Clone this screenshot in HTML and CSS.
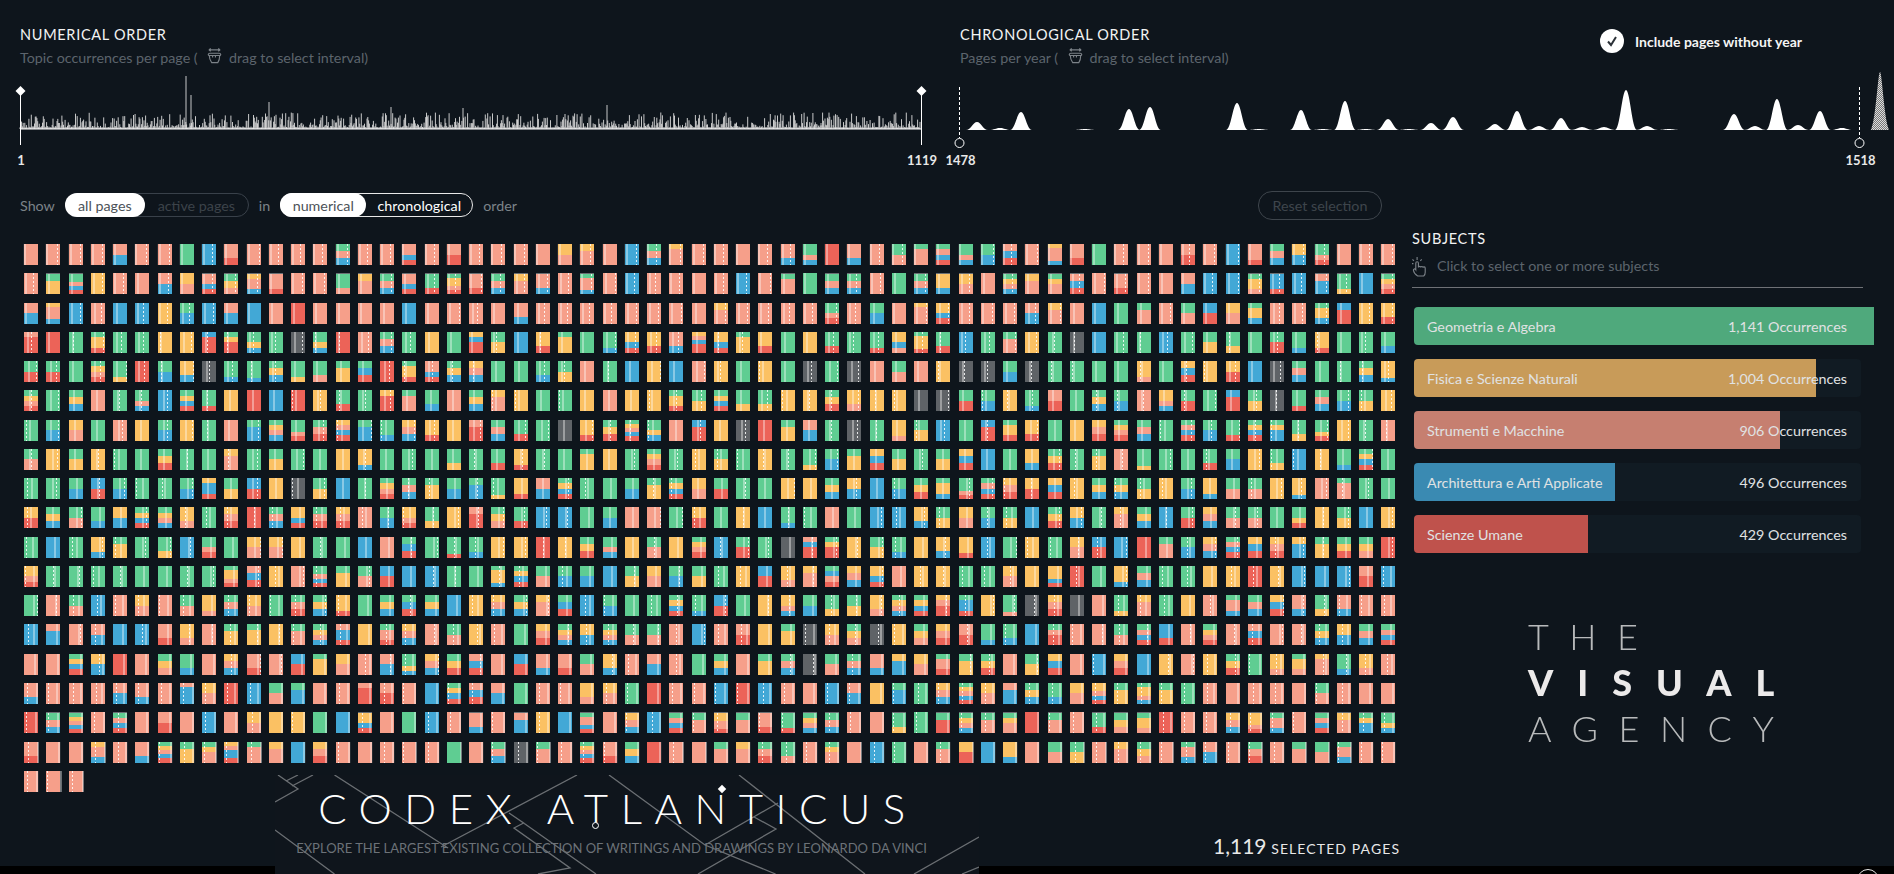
FILE: index.html
```html
<!DOCTYPE html>
<html>
    <head>
        <title>Codex Atlanticus</title>
        <link rel="stylesheet" href="styles.css">
    </head>
    <body>
        <header class="charts">
            <section class="chart-block chart-num">
                <div class="chart-head">
                    <div>
                        <h2 class="heading">NUMERICAL ORDER</h2>
                        <p class="hint">Topic occurrences per page (
                            <svg class="grab" viewBox="0 0 18 18"><use href="#grab-icon"/></svg>
                            drag to select interval)</p>
                    </div>
                </div>
                <svg id="numChart" class="chart" viewBox="0 70 940 100"></svg>
            </section>
            <section class="chart-block chart-year">
                <div class="chart-head">
                    <div class="head-text">
                        <h2 class="heading">CHRONOLOGICAL ORDER</h2>
                        <p class="hint">Pages per year (
                            <svg class="grab" viewBox="0 0 18 18"><use href="#grab-icon"/></svg>
                            drag to select interval)</p>
                    </div>
                    <div class="year-toggle">
                        <span class="check">
                            <svg viewBox="0 0 24 24"><path d="M8 12.500l3 3.500 5-8" /></svg>
                        </span>
                        Include pages without year
                    </div>
                </div>
                <svg id="yearChart" class="chart" viewBox="940 70 954 100"></svg>
            </section>
        </header>

        <div class="controls">
            <span>Show</span>
            <div class="switch switch-dim">
                <span class="opt opt-on opt-all">all pages</span>
                <span class="opt opt-active">active pages</span>
            </div>
            <span>in</span>
            <div class="switch switch-lit">
                <span class="opt opt-on opt-num">numerical</span>
                <span class="opt opt-chrono">chronological</span>
            </div>
            <span>order</span>
            <button class="reset">Reset selection</button>
        </div>

        <main class="content">
            <div id="pages" class="pages"></div>
            <aside class="subjects">
                <h2 class="heading">SUBJECTS</h2>
                <p class="hint subject-hint">
                    <svg class="tap" viewBox="0 0 18 22">
                        <path d="M6 21c-2-1-4-3-4.500-6-.2-1.500 1.500-2 2.500-.5V7.500c0-2 2.800-2 2.800 0V12c0-1.600 2.500-1.600 2.500 0 0-1.400 2.400-1.400 2.400 .2 .2-1.200 2.300-1 2.300 .6V17c0 1.700-.6 3-1.500 4z"/>
                        <path d="M5.400 4V1M2 5L.5 3.500M8.800 5l1.500-1.500M1.500 8H0"/>
                    </svg>
                    Click to select one or more subjects
                </p>
                <div id="bars" class="bars"></div>
                <div class="logo">
                    <div class="logo-line">THE</div>
                    <div class="logo-line logo-bold">VISUAL</div>
                    <div class="logo-line">AGENCY</div>
                </div>
            </aside>
        </main>

        <footer class="footer">
            <div class="banner">
                <svg class="banner-lines" viewBox="275 775 704 99">
                    <path d="M275 802L298 789 278 775M313 775L292 786M298 775L286 781"/>
                    <path d="M334.500 775L448 848M577 775L441 847M275 830L334.500 874"/>
                    <path d="M509 813L523.600 823 514 828 570 868 538 874M523.600 823L596 874"/>
                    <path d="M609 775L705 845 775.600 874M778 803L705 845M754 817L776 829 698 874M739 775L865 874"/>
                    <path d="M979 837L914 874M979 867L962 874"/>
                </svg>
                <h1 class="title">CODEX A<span class="mark-ring">T</span>LA<span class="mark-tip">N</span>TICUS</h1>
                <p class="tagline">EXPLORE THE LARGEST EXISTING COLLECTION OF WRITINGS AND DRAWINGS BY LEONARDO DA VINCI</p>
            </div>
            <div class="count"><b>1,119</b> SELECTED PAGES</div>
            <span class="help"></span>
        </footer>

        <svg class="defs" width="0" height="0">
            <symbol id="grab-icon" viewBox="0 0 18 18">
                <path d="M3 2h12M3 2l2-1.500M3 2l2 1.500M15 2l-2-1.500M15 2l-2 1.500"/>
                <path d="M3.500 8c-1.500 0-1.500-2.500 .5-2.500h10c2 0 2 2.500 .5 2.500M3.500 8c0 4 1 5.500 2.500 7.500h6.500c1.500-2 2-3.500 2-7.500M3.500 8h11M7 8v2M10 8v2"/>
            </symbol>
        </svg>
        <script src="app.js"></script>
    </body>
</html>
```

FILE: styles.css
```css
html, body{
    margin:0;
    padding:0;
    height:874px;
    overflow:hidden;
}
body{
    font-family: 'Lato', sans-serif;
    font-size:14.300px;
    color:#687078;
    background-color:#0e151c;
}
.charts{
    display:flex;
    padding-top:25px;
}
.chart-block{
    padding-left:20px;
    box-sizing:border-box;
}
.chart-num{
    width:940px;
}
.chart-year{
    width:954px;
}
.chart-head{
    display:flex;
    height:45px;
}
.head-text{
    width:640px;
}
.chart{
    display:block;
    width:calc(100% + 20px);
    height:100px;
    margin-left:-20px;
    overflow:visible;
}
.chart-label{
    fill:#e8e8e8;
    font-size:13px;
    font-weight:700;
    text-anchor:middle;
}
.heading{
    margin:0;
    font-size:14.500px;
    font-weight:400;
    line-height:20px;
    letter-spacing:.7px;
    color:#f2f3f3;
}
.hint{
    margin:3px 0 0;
    line-height:20px;
    white-space:nowrap;
    color:#5c646c;
}
.grab{
    width:17px;
    height:17px;
    margin:0 2px 0 5px;
    vertical-align:-2px;
    fill:none;
    stroke:#7c8288;
    stroke-width:1.200;
}
.defs{
    position:absolute;
}
.year-toggle{
    display:flex;
    align-items:center;
    gap:11px;
    height:24px;
    margin-top:4px;
    font-size:14px;
    font-weight:700;
    color:#f4f4f4;
}
.check{
    width:24px;
    height:24px;
    border-radius:50%;
    background-color:#fff;
}
.check svg{
    display:block;
    fill:none;
    stroke:#2c3238;
    stroke-width:2;
}
.controls{
    display:flex;
    align-items:center;
    gap:10px;
    width:1382px;
    height:28px;
    margin-top:21px;
    padding-left:20px;
    box-sizing:border-box;
    color:#7c8389;
}
.switch{
    display:flex;
    height:24px;
    box-sizing:border-box;
    border-radius:12px;
    border:1px solid #39414a;
}
.switch-lit{
    border-color:#e8e8e8;
}
.opt{
    display:flex;
    align-items:center;
    justify-content:center;
    box-sizing:border-box;
    border-radius:12px;
}
.opt-on{
    margin:-1px 0 -1px -1px;
    color:#4c5258;
    background-color:#fff;
}
.opt-all{
    width:80px;
}
.opt-active{
    width:103px;
    color:#3c434a;
}
.opt-num{
    width:86px;
}
.opt-chrono{
    width:106px;
    color:#fff;
}
.reset{
    width:124px;
    height:29px;
    margin-left:auto;
    padding:0;
    font:inherit;
    color:#3e454c;
    background:none;
    border:1px solid #3e454c;
    border-radius:14px;
}
.content{
    display:flex;
    height:556px;
}
.pages{
    display:grid;
    grid-template-columns:repeat(62, 14px);
    grid-auto-rows:21px;
    justify-content:space-between;
    row-gap:8.280px;
    align-content:start;
    width:1372px;
    height:21px;
    margin:25px 0 0 24px;
}
.page{
    position:relative;
    display:flex;
    flex-direction:column;
}
.page-left{
    box-shadow:-1px 0 0 #262c32;
}
.page-right{
    box-shadow:1px 0 0 #262c32;
}
.page-capped{
    border-top:1px solid #6a6f73;
    box-sizing:border-box;
}
.seg{
    flex:1;
}
.seg-s{ background-color:#f69f8a; }
.seg-g{ background-color:#5fcd92; }
.seg-y{ background-color:#fbc163; }
.seg-b{ background-color:#42a8d6; }
.seg-r{ background-color:#ec6358; }
.seg-k{ background-color:#5f6367; }
.spine{
    position:absolute;
    top:0;
    bottom:0;
    width:2px;
    background-color:rgba(255,255,255,.38);
}
.stitch{
    position:absolute;
    top:0;
    bottom:0;
    width:1px;
    background:repeating-linear-gradient(rgba(255,255,255,.85) 0 2px, transparent 2px 4px);
}
.subjects{
    width:462px;
    margin-left:16px;
    padding-top:10px;
}
.subject-hint{
    display:flex;
    align-items:center;
    gap:8px;
    width:451px;
    height:22px;
    margin-top:6px;
    padding-bottom:10px;
    border-bottom:1px solid #6e7176;
}
.tap{
    width:17px;
    height:21px;
    fill:none;
    stroke:#7c8288;
    stroke-width:1.200;
}
.bars{
    display:flex;
    flex-direction:column;
    gap:14px;
    width:447px;
    margin:19px 0 0 2px;
}
.bar{
    position:relative;
    display:flex;
    justify-content:space-between;
    align-items:center;
    height:38px;
    padding:0 14px 0 13px;
    border-radius:4px;
    color:#e0e2e3;
    background-color:#111b23;
}
.bar-fill{
    position:absolute;
    top:0;
    bottom:0;
    left:0;
    border-radius:4px 0 0 4px;
}
.bar-text{
    position:relative;
}
.fill-g{ background-color:#4fa97c; }
.fill-y{ background-color:#c89b59; }
.fill-s{ background-color:#c67f70; }
.fill-b{ background-color:#3a8ab2; }
.fill-r{ background-color:#bf524c; }
.logo{
    margin:60px 0 0 116px;
    filter:blur(.4px);
}
.logo-line{
    height:46px;
    font-size:36px;
    font-weight:300;
    line-height:46px;
    letter-spacing:20.500px;
    color:#b8babb;
}
.logo-bold{
    font-weight:900;
    letter-spacing:24px;
    color:#eceaea;
}
.footer{
    position:relative;
    display:flex;
    height:99px;
    padding-left:275px;
    background:linear-gradient(transparent 91px, #000 91px);
}
.banner{
    position:relative;
    width:704px;
    overflow:hidden;
    text-align:center;
    background-color:#0f151c;
}
.banner-lines{
    position:absolute;
    top:0;
    left:0;
    width:704px;
    height:99px;
    fill:none;
    stroke:#6b6f73;
    stroke-width:1.300;
}
.title{
    position:relative;
    margin:12px 0 0;
    padding-right:18px;
    font-size:42px;
    font-weight:300;
    line-height:42px;
    letter-spacing:12.500px;
    color:#fff;
}
.mark-ring, .mark-tip{
    position:relative;
}
.mark-ring::after{
    content:"";
    position:absolute;
    left:calc((100% - 12.500px) / 2 - 4px);
    bottom:4px;
    width:5px;
    height:5px;
    border:1px solid #fff;
    border-radius:50%;
    background-color:#0f151c;
}
.mark-tip::after{
    content:"";
    position:absolute;
    right:14px;
    top:3px;
    width:6px;
    height:6px;
    transform:rotate(45deg);
    background-color:#fff;
}
.tagline{
    position:relative;
    margin:11px 0 0;
    padding-right:31px;
    font-size:13px;
    white-space:nowrap;
    color:#6c7278;
}
.count{
    margin:58px 0 0 234px;
    font-size:14px;
    letter-spacing:1.100px;
    color:#e8e8e8;
}
.count b{
    font-size:21px;
    font-weight:400;
    letter-spacing:0;
}
.help{
    position:absolute;
    top:94px;
    left:1857px;
    width:20px;
    height:20px;
    border:1px solid #e8e8e8;
    border-radius:50%;
}
```

FILE: app.js
```js
// colours per page, top to bottom; each letter is one topic share
var rows = [
    "s s s s sb s s g b ssr s s s s gsb s s ssbr s sr s s s s ys yss s b gsb ysss s s s s ssb ggsb r ssb s gs gsss gsbr ggsb gb sbr s ysssb ssr g s s s sr s b sssr gsb yb ggsr s s s",
    "s gyy ggsbr y s s sb ys ssbr gys yssb sssr s s ggs yss gsb ssbr ggr gyysr ssr gsb yss ssb s gsssb s b s s s s b s gsss g gsb gsb s g gsb yyb yyss s gysb yss gyss sbr s ssr s s sb b b gyys bbbr b sbb gggy b gysr",
    "sb ysssb b s b b y gb b sb b s r s s s s b s s s s ssb s s s s s s s s yss s s s s ggsr s gb s yssss yybr s s s sb yss s b g gss s gs br ys gyyb s s gyyb brr y yyr",
    "srrr r g gyyr g g y y brrr gyrr ggyb g k ggyb r s gsb g y g ybrr gy b yyr gyyy g gggb yybr yyr ssb ysbrr yybr gyyy yyr g y ggr g gggr yybs gyyyr ggr b g gss y g k b g g b g gy ggy g gr gggb yyyr g g ggb",
    "gr gr g gysr gggy r gb yyb k gggb ggggb gyb gggy ggs gyy gbr r gyyr ssbr gyb ysb g g ggb gy s g b y b s y g y g k g k s gs s y k k gb k g g g g yyys g ybr y yr b k gsb g g gyb yyyyb",
    "gysr g gyb s g ggsb b gybr gggr y r b r y ggr g yrrr gsss ggb s gyb yss y g g y s y y gyyr gy gybr ggy ggy y y gyr yys y y k k gr gb y gggb sr g gyb gb s yysb gr g brr gy k gggr gsb gb gy y",
    "g gb ys g s y gb y g s gbb gysb gggsr gsr ysbr gbb gggb ysb yyyr y srr gsb ggr g k yyyr gyr gysbr ggyb s brr y k r gyy sb g k g yyyys gy b g brr gyyr yyr g y ysr gysr gsb g gsbr gb gggr gybr gybb ggy gggyr y g",
    "gs y gy y g g gyr g g yss g gy g g y yyyb g g g ggy g ggr yyyr g g gyyy y g gysr g y gy g y g gggy gb gyy ybr gy g gy ybr b g yyb gyr g gyy s ggggy g g ggr gb y ggy b y gggb gybr g",
    "g g gb br gb g g gb ybbr gy br y k gy b g gysr gsb gyy gb gbb ggggy yyyr sb gybr g g gb gyy gybr ys gr g g y y gyb yb b gb gyr gyyb gggsr gsbr ysr yr ybr y gyb gyb gy y gb yyyb gs gs y yyyyb s gsss g g",
    "yr gyb gs ggb yb gybr gysb yys g ysr r gsb yybr gsr ysr s gb yysr ggy y srr gys ggr b b g gb s s g yr g y b gggb g s g b b yyb gy ys gb gy b gyr yb g yss gyb b gr ysb gs gs g ggyr y gy b y",
    "g b g yyyb gyy g ggy b ggsr g ys ys y g g b s gbr g gggggr gggb y y r y gyr ggsb y gs y gysr b gr g k sbrr gyrr y gy gggb y yyb yyyyr b g y g ys br b r gss gb ysb gsbr ybr ysr ybb gyy gyr gys r",
    "yysr g g g g g g g g gyysr sbr y s ggsbr gyy gs br b b g g gyyyb gybr gs gb gb b gy ys gb gy g y br yys yss gbsr ysb yybr s y y g g ys y yyybr r g yyyb gsb g g y y r y b b b sr b",
    "g s gs b s ys s gs yyys gsb ys g gsr gyb yyyr g gyb gbr gyb b y ysb gyb yss gbr b gb g g gybr gggb br g y yysb gb ggy gy yys gysb gybr ysrr gbbr y ggggs k ysr k s gggy yss g y s gssb gsb ybr ssb ggy ssb s s",
    "b sbb s sb b b ssr yys s gyy gyyy y gss gysb sbbr y gssr ysb s gs y s g ysr gysb yb gysb gs gs s b s sr y gyy k ys gys k y gys ysr sr gggb ggb b gsrr s s gs gsbr bbr s gysr s sbr s s gyb yb gsb gsbr",
    "s s gybr yb r s gys ggb s ysb ssr s br gyyy ys s sb gggyb ysb gyr sbr s br ssb ssr gs yyb s sb s g gyb s gyy gsb k gs gsb ssb ybb ys gssr gyy gyr s gy ybr s b ysr b y s y gyr g yyys gyys ysss gggb yys s",
    "ssb s s s sb ssb s sbbbb ys r b gs gbb s s srrr sr s b gybr sbr sb g s s yys ys g r s s b r b s s b sb y gbb g ysb gysbr ys sbb gyb ggb ys yysbr gyy gyysb gyy g s s s s s gs s s s",
    "r gsb gysbr s gsbr s sr s b s ys y y g b yybr s g b s ssb s sbb y b gssbr s ysb b gsbr gss yyssr gss ssr gggr gysb gsb s s ggy g grr gysb gss gyss r gss s ggr gys gyys r s s ysb yyysr gssb s gsbr yss gybb ggyb",
    "ssr s s yssb s ssb gysbr gyy gyss ysbbr gsss yss b ysr s s s s s g s gsb k gss s gysbr ssr gyb r s s gss yss gsr ggs s gyss s b g s gss yyrr b yyyb s gs gy s yss gys s gssb sb s gsr s gss gs gssb s s",
    "s s s"
];

var subjects = [
    {name:"Geometria e Algebra", count:1141, width:460, cls:"fill-g"},
    {name:"Fisica e Scienze Naturali", count:1004, width:402, cls:"fill-y"},
    {name:"Strumenti e Macchine", count:906, width:366, cls:"fill-s"},
    {name:"Architettura e Arti Applicate", count:496, width:201, cls:"fill-b"},
    {name:"Scienze Umane", count:429, width:174, cls:"fill-r"}
];

// centre x and top y of each yearly bump
var years = [
    [977,122],[1000,128],[1021,112],[1085,129],[1129,109],[1150,107],[1237,103],[1259,129],[1301,110],[1323,129],
    [1345,101],[1366,129],[1388,119],[1409,129],[1431,123],[1453,117],[1495,124],[1517,111],[1539,126],[1561,118],
    [1582,127],[1604,127],[1626,90],[1647,126],[1669,129],[1734,114],[1755,126],[1777,99],[1798,125],[1820,111],[1842,128]
];

var COLS = 62;

var seed = 7;
function rnd(){
    seed = (seed * 16807) % 2147483647;
    return seed / 2147483647;
}

function el(tag, cls, parent){
    var node = document.createElement(tag);
    node.className = cls;
    parent.appendChild(node);
    return node;
}

function rowCodes(row, r){
    var codes = row.split(" ");
    if(r == rows.length - 1) return codes;
    // every full row holds the same number of pages
    while(codes.length < COLS) codes.push("s");
    return codes.slice(0, COLS);
}

function buildPages(){
    var box = document.getElementById("pages");
    rows.forEach(function(row, r){
        rowCodes(row, r).forEach(function(code){
            var page = el("div", "page", box);
            if(r == 0) page.classList.add("page-left");
            if(r >= 17) page.classList.add("page-right");
            if((r == 1 || r == 16) && code.length > 2) page.classList.add("page-capped");
            code.split("").forEach(function(c){
                el("span", "seg seg-" + c, page);
            });
            var spine = el("i", "spine", page);
            spine.style.left = Math.round(r * 0.68 + rnd() * 1.5) + "px";
            if(rnd() < 0.65){
                var stitch = el("i", "stitch", page);
                var x = r < 3 ? 8 + rnd() * 4 : r > 14 ? 1 + rnd() * 4 : 1 + rnd() * 12;
                stitch.style.left = Math.round(x) + "px";
            }
        });
    });
}

function buildBars(){
    var box = document.getElementById("bars");
    subjects.forEach(function(s){
        var bar = el("div", "bar", box);
        var fill = el("div", "bar-fill " + s.cls, bar);
        fill.style.width = s.width + "px";
        el("span", "bar-text", bar).textContent = s.name;
        el("span", "bar-text", bar).textContent = s.count.toLocaleString("en-US") + " Occurrences";
    });
}

function svgLabel(text, x, y){
    return '<text class="chart-label" x="' + x + '" y="' + y + '">' + text + '</text>';
}

function buildNumChart(){
    var d = "";
    for(var i = 0; i < 1119; i++){
        var h = 1.5 + Math.pow(rnd(), 3.2) * 15;
        d += "M" + (20 + i * 0.805).toFixed(1) + " 129V" + (129 - h).toFixed(1);
    }
    d += "M186 129V76M191 129V95M269 129V102M607 129V105M391 129V107M463 129V108";
    var html = '<path d="' + d + '" stroke="#dcdcdc" stroke-width="0.9" fill="none"/>';
    html += '<path d="M20 129H921" stroke="#fff" stroke-width="1"/>';
    [[20,"1"],[921,"1119"]].forEach(function(m){
        html += '<path d="M' + (m[0] + 0.5) + ' 95V145" stroke="#fff" stroke-width="1"/>';
        html += '<path d="M' + (m[0] + 0.5) + ' 86l5 5-5 5-5-5z" fill="#fff"/>';
        html += svgLabel(m[1], m[0] + 1, 165);
    });
    document.getElementById("numChart").innerHTML = html;
}

function bump(x, top){
    return "M" + (x - 11) + " 130C" + (x - 6) + " 130 " + (x - 4) + " " + top + " " + x + " " + top +
        "C" + (x + 4) + " " + top + " " + (x + 6) + " 130 " + (x + 11) + " 130Z";
}

function buildYearChart(){
    var d = "";
    years.forEach(function(y){
        d += bump(y[0], y[1]);
    });
    var html = '<defs><pattern id="hatch" width="2" height="2" patternUnits="userSpaceOnUse">' +
        '<rect width="2" height="2" fill="#777"/><rect width="1" height="1" fill="#ddd"/><rect x="1" y="1" width="1" height="1" fill="#ddd"/></pattern></defs>';
    html += '<path d="' + d + '" fill="#fff"/>';
    html += '<path d="M1871 130C1876 118 1878 72 1880 72C1882 72 1884 118 1889 130Z" fill="url(#hatch)"/>';
    [[959.5,"1478"],[1859.5,"1518"]].forEach(function(m){
        html += '<path d="M' + m[0] + ' 87V138" stroke="#fff" stroke-width="1" stroke-dasharray="3 2"/>';
        html += '<circle cx="' + m[0] + '" cy="143" r="4.5" fill="#0e151c" stroke="#fff"/>';
        html += svgLabel(m[1], m[0] + 1, 165);
    });
    document.getElementById("yearChart").innerHTML = html;
}

buildPages();
buildBars();
buildNumChart();
buildYearChart();
```
